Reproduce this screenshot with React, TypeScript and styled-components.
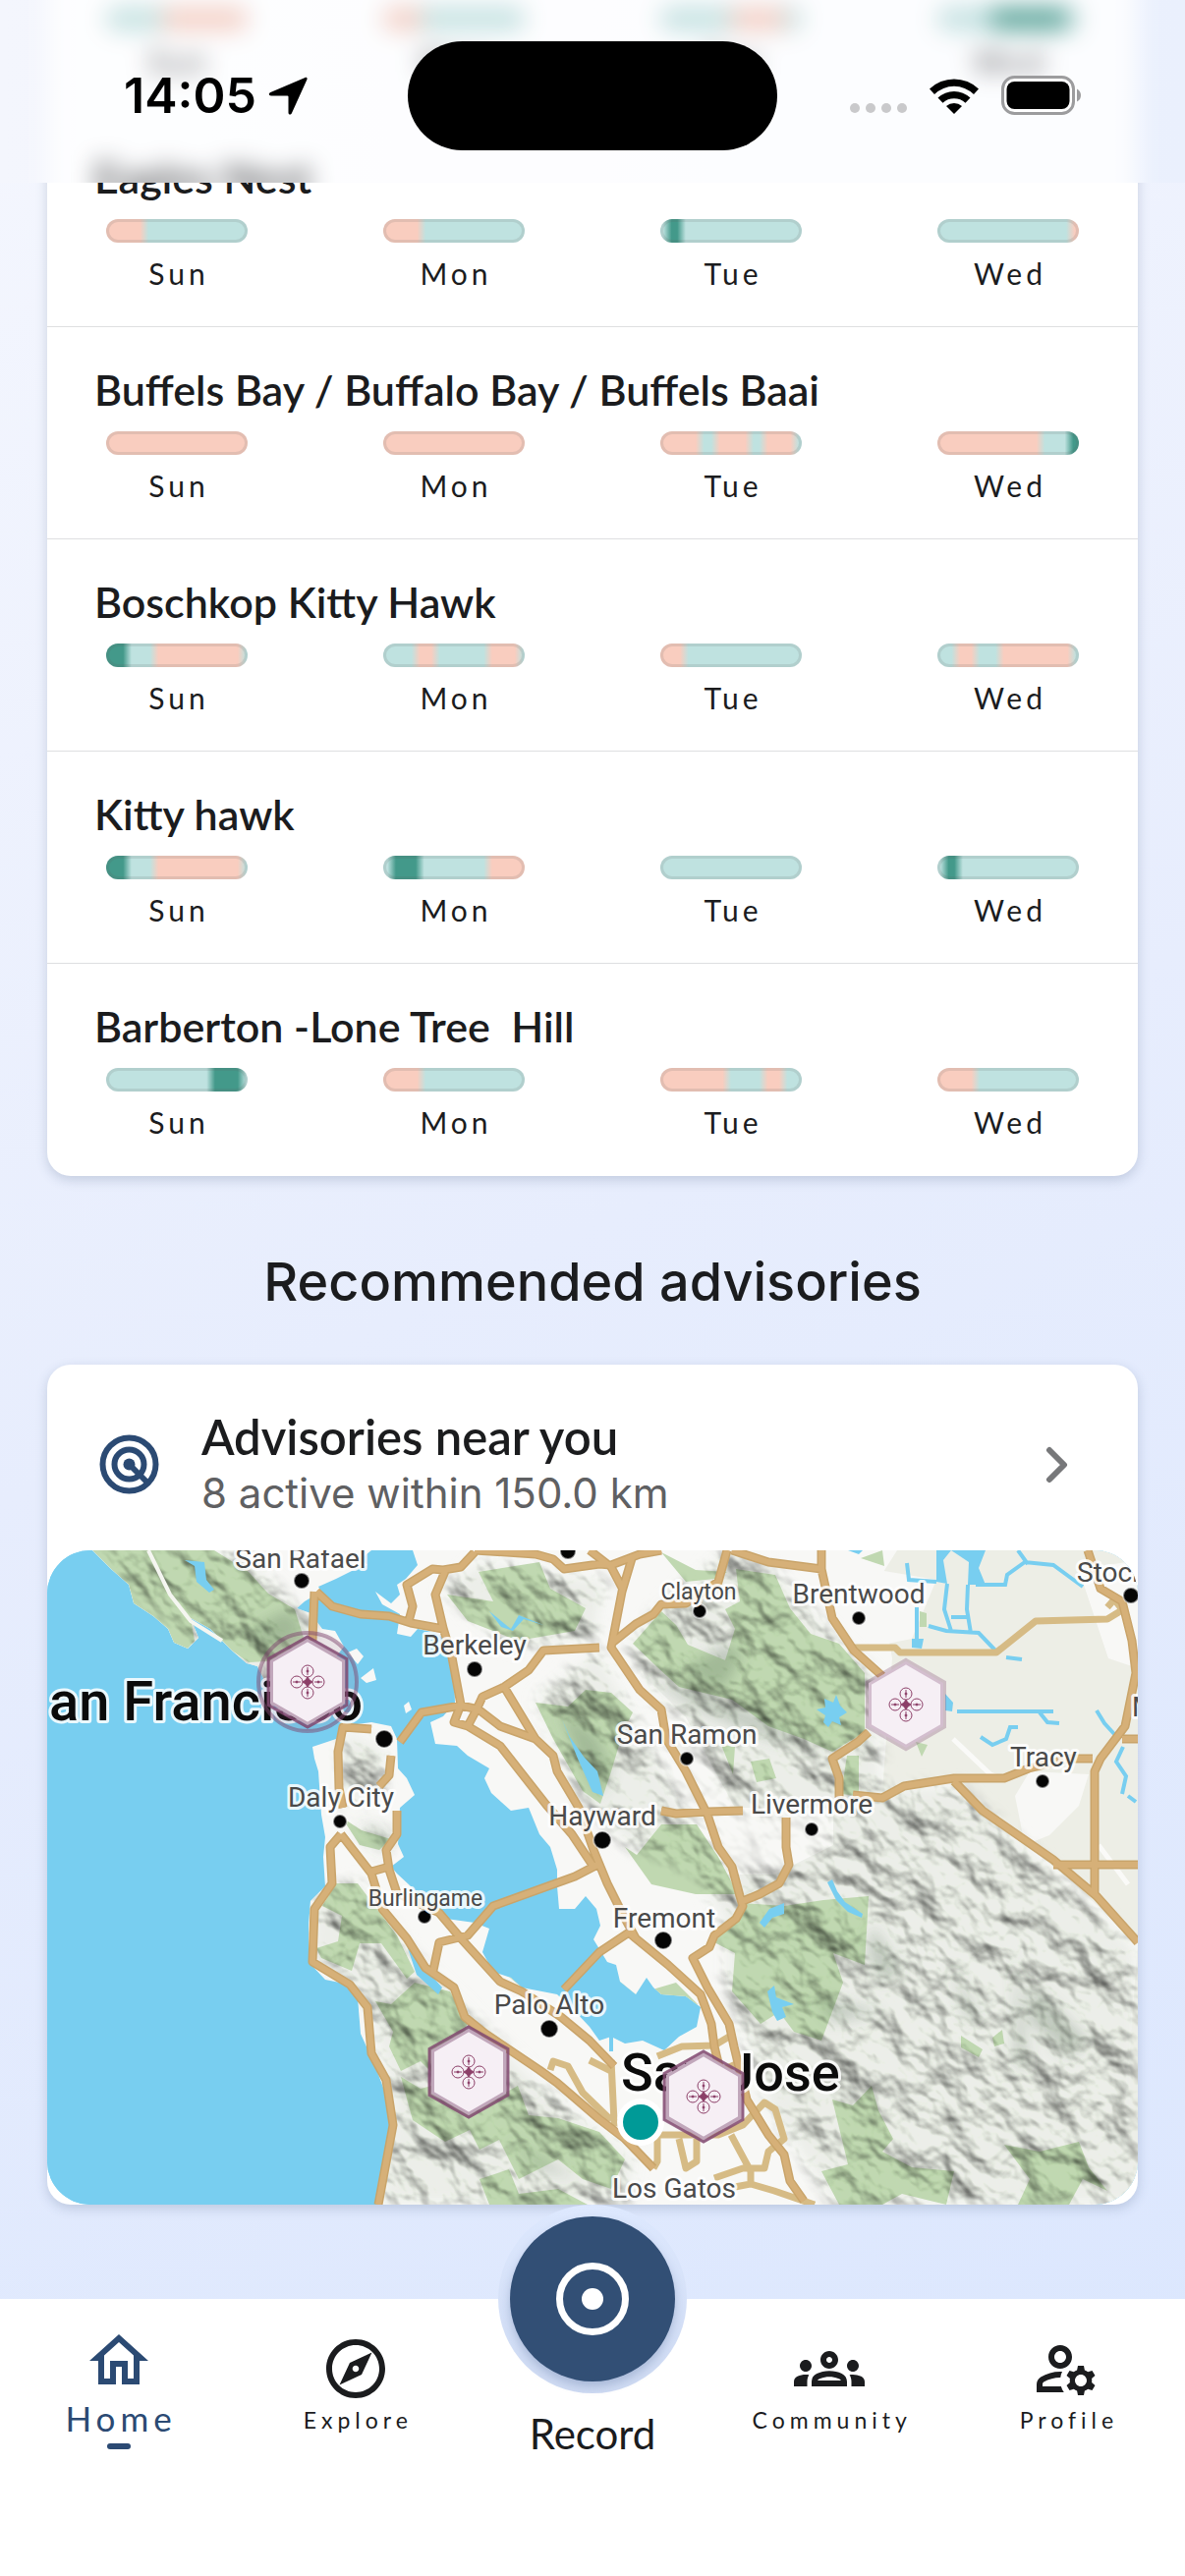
import React from "react";
import styled, { createGlobalStyle, css } from "styled-components";
import {
  MdOutlineHome,
  MdOutlineExplore,
  MdOutlineGroups,
  MdOutlineManageAccounts,
} from "react-icons/md";

const color = {
  ink: "#1b1c1e",
  navy: "#2b4a73",
  button: "#324f75",
  muted: "#5f6062",
  line: "#dedfe1",
  good: "#bfe2e0",
  great: "#43998a",
  poor: "#f9cdbf",
};

const GlobalStyle = createGlobalStyle`
  * { box-sizing: border-box; }
  body {
    margin: 0;
    color: ${color.ink};
    font-family: Lato, "Noto Sans", sans-serif;
  }
  h2, h3, p, ul { margin: 0; padding: 0; font-weight: inherit; }
  a { color: inherit; text-decoration: none; }
`;

const Screen = styled.div`
  display: flex;
  flex-direction: column;
  min-height: 100vh;
  overflow: hidden;
  background: linear-gradient(155deg, #f5f7fe 0%, #e7edfd 48%, #dae6fe 100%);
`;

/* ---------- Status bar ---------- */

const StatusBar = styled.header`
  position: absolute;
  top: 0;
  left: 0;
  right: 0;
  z-index: 2;
  height: 186px;
  overflow: hidden;
  display: grid;
  grid-template-columns: 1fr 376px 1fr;
  align-items: center;
  padding-bottom: 8px;
  padding-top: 16px;
  background: linear-gradient(90deg, #f4f6fd, #eaf0fd);
`;

/* The rows that have scrolled under the bar, seen through frosted glass. */
const Frosted = styled.div`
  position: absolute;
  z-index: -1;
  inset: -60px 48px auto;
  padding-top: 60px;
  background: #fff;
  filter: blur(12px) opacity(0.85);
`;

const Clock = styled.div`
  display: flex;
  align-items: center;
  justify-content: center;
  gap: 12px;
  padding-left: 24px;
  font: 600 50px/60px Inter, sans-serif;
  color: #000;
`;

const Island = styled.div`
  height: 111px;
  border-radius: 56px;
  background: #000;
`;

const Indicators = styled.div`
  display: flex;
  align-items: center;
  justify-content: flex-end;
  gap: 22px;
  padding-right: 105px;
`;

const SignalDots = styled.div`
  display: flex;
  gap: 6px;
  padding-top: 26px;
  span {
    width: 10px;
    height: 10px;
    border-radius: 5px;
    background: #c9c9cb;
  }
`;

/* ---------- Cards ---------- */

const Main = styled.main`
  flex: 1;
  padding: 0 48px 96px;
`;

const Card = styled.section<{ $scrolled?: boolean }>`
  padding-top: ${(p) => (p.$scrolled ? "117px" : "0")};
  background: #fff;
  border-radius: 24px;
  box-shadow: 0 4px 12px rgba(60, 80, 120, 0.22);
  overflow: hidden;
`;

const SiteRow = styled.article<{ $nameless?: boolean }>`
  display: flex;
  flex-direction: column;
  gap: 12px;
  padding: ${(p) => (p.$nameless ? "7px" : "34px")} 48px 34px;
  border-bottom: 1px solid ${(p) => (p.$nameless ? "transparent" : color.line)};
  &:last-child {
    border-bottom-color: transparent;
  }
`;

const SiteName = styled.h3`
  font-size: 43px;
  font-weight: 600;
  line-height: 60px;
  white-space: pre-wrap;
`;

const Days = styled.ul`
  display: flex;
  justify-content: space-between;
  list-style: none;
`;

const Day = styled.li`
  width: 168px;
  display: flex;
  flex-direction: column;
  align-items: center;
  gap: 11px;
  font-size: 30px;
  font-weight: 400;
  line-height: 40px;
  letter-spacing: 4px;
  text-indent: 4px;
`;

const Bar = styled.div`
  width: 144px;
  height: 24px;
  border-radius: 12px;
  box-shadow: inset 0 0 0 3px rgba(90, 90, 90, 0.14);
`;

type Segment = [keyof typeof bands, number];
const bands = { g: color.good, d: color.great, p: color.poor };

function gradient(segments: Segment[]) {
  const stops: string[] = [];
  let start = 0;
  segments.forEach(([band, end], i) => {
    const from = i === 0 ? 0 : start + 3;
    const to = i === segments.length - 1 ? 100 : end - 3;
    stops.push(`${bands[band]} ${from}%`, `${bands[band]} ${to}%`);
    start = end;
  });
  return `linear-gradient(90deg, ${stops.join(", ")})`;
}

const dayNames = ["Sun", "Mon", "Tue", "Wed"];

type Site = { name?: string; days: Segment[][] };

const scrolledSite: Site = {
  days: [
    [["g", 40], ["p", 100]],
    [["p", 27], ["g", 100]],
    [["g", 50], ["p", 88], ["g", 100]],
    [["g", 38], ["d", 92], ["g", 100]],
  ],
};

const sites: Site[] = [
  {
    name: "Eagles Nest",
    days: [
      [["p", 27], ["g", 100]],
      [["p", 27], ["g", 100]],
      [["g", 5], ["d", 15], ["g", 100]],
      [["g", 94], ["p", 100]],
    ],
  },
  {
    name: "Buffels Bay / Buffalo Bay / Buffels Baai",
    days: [
      [["p", 100]],
      [["p", 100]],
      [["p", 28], ["g", 39], ["p", 63], ["g", 73], ["p", 95], ["g", 100]],
      [["p", 73], ["g", 93], ["d", 100]],
    ],
  },
  {
    name: "Boschkop Kitty Hawk",
    days: [
      [["d", 15], ["g", 34], ["p", 96], ["g", 100]],
      [["g", 23], ["p", 37], ["g", 74], ["p", 96], ["g", 100]],
      [["p", 17], ["g", 100]],
      [["g", 13], ["p", 27], ["g", 44], ["p", 95], ["g", 100]],
    ],
  },
  {
    name: "Kitty hawk",
    days: [
      [["d", 15], ["g", 34], ["p", 96], ["g", 100]],
      [["g", 6], ["d", 26], ["g", 74], ["p", 100]],
      [["g", 100]],
      [["g", 5], ["d", 15], ["g", 100]],
    ],
  },
  {
    name: "Barberton -Lone Tree  Hill",
    days: [
      [["g", 74], ["d", 96], ["g", 100]],
      [["p", 27], ["g", 100]],
      [["p", 47], ["g", 73], ["p", 87], ["g", 100]],
      [["p", 27], ["g", 100]],
    ],
  },
];

function SiteForecast({ site }: { site: Site }) {
  return (
    <SiteRow $nameless={!site.name}>
      {site.name && <SiteName>{site.name}</SiteName>}
      <Days>
        {site.days.map((segments, d) => (
          <Day key={d}>
            <Bar style={{ background: gradient(segments) }} />
            {dayNames[d]}
          </Day>
        ))}
      </Days>
    </SiteRow>
  );
}

const SectionTitle = styled.h2`
  padding: 78px 0 54px;
  text-align: center;
  font: 500 54px/60px Inter, sans-serif;
`;

const AdvisoryLink = styled.a`
  display: flex;
  align-items: center;
  gap: 43px;
  height: 189px;
  padding: 14px 69px 0 53px;
`;

const AdvisoryText = styled.div`
  flex: 1;
  h3 {
    font-size: 49px;
    font-weight: 600;
    line-height: 58px;
  }
  p {
    font: 400 42px/58px Inter, sans-serif;
    color: ${color.muted};
  }
`;

/* ---------- Map ---------- */

const MapView = styled.svg`
  display: block;
  width: 100%;
  height: auto;
  border-radius: 44px;
  background: #78cef0;
  text {
    font-family: Roboto, sans-serif;
    fill: #4a4a4a;
    stroke: rgba(255, 255, 255, 0.85);
    stroke-width: 6px;
    stroke-linejoin: round;
    paint-order: stroke;
  }
`;

const land = [
  "M46,0 65,19 83,35 88,54 108,67 123,80 129,94 143,100 154,89 146,69 166,80 188,102 203,115 214,118 230,150 262,160 285,120 302,98 293,82 280,80 268,64 254,59 262,52 279,42 276,37 294,29 312,20 326,15 319,9 330,0Z",
  "M372,0 377,15 365,29 356,35 359,45 350,54 334,42 341,55 359,65 356,85 370,88 377,80 396,84 406,92 408,109 414,125 415,155 403,169 390,175 395,197 417,199 428,209 450,222 445,232 452,247 472,265 490,262 501,289 512,302 519,325 519,342 521,365 537,365 548,352 559,365 563,382 556,396 570,419 579,422 583,439 599,452 610,435 617,445 625,452 650,454 665,465 661,485 643,495 628,509 606,499 588,502 574,495 562,499 552,485 537,469 519,452 483,445 472,435 454,429 443,409 450,385 435,379 399,374 381,355 370,342 356,329 350,322 363,312 357,299 359,262 374,249 366,232 357,222 356,192 350,179 330,175 301,179 294,192 270,200 272,212 276,225 279,269 283,292 281,312 283,342 268,357 266,382 266,419 283,437 308,442 316,455 319,492 334,525 345,555 352,565 348,592 343,622 336,666 1110,666 1110,0Z",
  "M306,104 316,116 322,108 315,100ZM319,130 332,120 335,132 325,135ZM363,158 368,154 371,162 365,166Z",
].join("");

const delta =
  "M846,30 865,0 1110,0 1110,666 1090,666 1110,400 1040,335 960,270 925,235 850,245 860,110Z";

const woods = [
  "M46,0 65,19 83,35 88,54 108,67 123,80 129,94 143,100 150,92 146,69 166,80 188,102 205,114 240,112 262,92 252,60 225,44 205,22 170,0Z",
  "M407,45 454,52 439,22 501,12 512,39 548,59 537,82 479,92 428,72Z",
  "M497,155 530,159 548,142 574,145 596,165 586,185 574,225 563,258 545,245 515,192Z",
  "M701,19 741,25 756,59 777,85 806,95 832,125 832,185 799,205 770,192 734,179 697,152 643,139 621,119 596,95 625,62 640,76 652,96 690,112 700,80 690,60 705,52Z",
  "M625,2 660,20 692,22 680,29 650,32Z",
  "M814,209 826,209 826,250 808,248ZM716,215 735,212 742,232 722,236ZM686,198 700,200 698,228Z",
  "M588,302 600,310 625,279 661,279 683,312 703,350 660,350 615,340Z",
  "M294,339 316,339 356,392 374,429 366,436 340,400 318,400 310,428 279,415 274,405 296,398 300,372 280,362Z",
  "M374,440 410,449 428,479 421,505 392,532 380,520 360,530 348,505 352,490 334,459 350,462Z",
  "M360,536 380,548 410,540 452,560 479,545 490,575 520,578 562,592 588,620 574,650 545,640 520,620 480,640 460,600 440,610 430,590 405,602 372,580ZM440,640 470,630 480,655 520,650 550,666 450,666Z",
  "M708,359 750,362 790,356 836,352 832,422 800,410 810,440 788,499 760,490 745,470 726,482 697,449 700,410 679,399Z",
  "M799,559 820,565 839,545 846,570 861,599 850,612 880,628 923,632 915,666 870,655 850,666 806,666 788,632 815,625Z",
  "M974,605 1010,612 1050,602 1060,628 1079,652 1054,640 1040,666 988,666 1000,640Z",
  "M930,494 952,508 948,516 930,506ZM962,496 972,488 974,502 964,505Z",
  "M465,430 480,405 494,420 512,440 550,430 562,440 545,452 483,445Z",
  "M583,439 599,452 640,440 662,462 655,482 610,490 575,470Z",
  "M300,272 320,285 350,294 338,305 318,300Z",
  "M828,8 850,0 852,16ZM888,62 895,64 895,78 888,78ZM884,195 896,198 890,210Z",
].join("");

const relief =
  "M46,0 150,100 240,150 275,80 200,0ZM400,40 440,10 570,30 560,90 470,100ZM497,150 560,100 590,150 640,250 690,330 700,400 660,330 590,300 540,250ZM590,95 625,55 690,0 740,20 810,95 845,130 850,240 925,238 1030,330 1110,405 1110,666 800,666 735,570 690,440 690,330 650,210ZM300,180 345,200 340,250 300,260ZM310,275 355,290 340,310ZM270,350 316,335 370,410 430,470 500,540 600,620 590,666 338,666 350,560 320,450 268,410Z";

const shadows =
  "M215,75 245,60 262,80 240,100 205,92ZM650,120 690,95 708,105 690,140 665,135ZM610,130 680,150 740,175 790,205 730,190 660,160ZM520,160 560,190 575,225 560,250 545,220ZM320,275 350,290 340,308ZM840,382 870,430 850,440 835,410ZM1000,440 1060,500 1040,515 1000,480ZM985,410 995,500 1000,530 985,520ZM920,420 950,480 935,475ZM470,600 540,640 500,630ZM780,455 850,470 800,480Z";

const flats = "M580,105 620,170 645,260 690,330 740,330 800,300 800,262 700,262 650,170 620,140Z";

const lakes = [
  "M783,162 792,160 791,151 800,155 803,147 807,158 814,165 806,170 808,178 799,174 795,180 790,175 792,168Z",
  "M725,379 735,365 750,359 750,370 738,374 730,384Z",
  "M794,338 799,335 804,347 812,358 830,370 829,374 815,368 803,356Z",
  "M733,449 740,443 742,455 760,462 748,465 752,475 743,479 738,470Z",
  "M140,10 160,12 162,30 170,40 165,43 152,32 150,16Z",
  "M366,402 380,420 402,445 398,452 376,432Z",
  "M444,54 462,78 474,82 485,70 505,76 480,66 472,80 450,62Z",
  "M524,172 532,190 546,210 560,225 566,250 555,246 540,212Z",
  "M905,0 955,0 948,18 955,35 937,35 938,12 920,0 912,10 916,34 905,32Z",
  "M880,90 892,90 890,100 880,99ZM914,146 922,155 921,164 914,163ZM815,0 830,0 826,4Z",
].join("");

const creeks =
  "M875,13 877,30 905,32M885,58 885,95M897,77 915,82 948,84 968,105M916,34 913,60 920,82M937,35 936,60 940,84M920,68H938M945,35H975L977,25 995,12 1024,15 1054,37M988,0 998,14M926,164H1024M1010,165 1018,175 1030,176M950,190 962,198 976,192 980,180 988,180M976,109 992,111M1068,163 1076,176 1086,187M1095,200 1088,215 1098,230 1094,248M1100,250 1108,256M574,495V510";

const roads = [
  "M270,92 272,42M274,42 290,57 319,65 348,67 370,74 403,80",
  "M435,2 421,17 403,20 392,19 366,35 372,57 368,72M406,19 395,45 403,79 412,109 421,157",
  "M435,0 497,4 515,9 526,19 562,14 574,15 603,4 625,0M552,0 574,17 585,38",
  "M596,5 585,42 574,99 603,142 625,162 630,192 650,225 672,269 683,302 697,322 705,352 708,362 701,375 679,392 674,404 657,415 672,445 694,482 699,505 712,559 734,595 750,615 756,642 770,662",
  "M574,95 599,75 617,65 625,55 650,54 683,32 692,0",
  "M697,0 734,12 788,19 799,69 821,102 850,128M788,19 788,0",
  "M1059,0 1072,39 1094,52 1104,92 1108,125 1097,179 1072,212 1066,225V352M1110,192H1094",
  "M1064,212 1040,212 999,222 974,232 923,232 872,240 850,252 820,249",
  "M923,235 952,265 1024,315 1068,352 1110,399M1024,320H1110",
  "M836,185 825,195 799,212 806,232 806,252",
  "M625,265 640,268 672,266 708,265M752,272V302L755,320 745,339 725,350 708,357",
  "M562,99 505,102 490,122 465,139 443,149 437,162 428,179 414,175 421,157",
  "M359,195 381,165 421,158 439,162 461,179 497,192 515,209 519,225 541,262 556,305 570,339 585,369 599,395 632,422 665,452 676,482 679,505 685,530",
  "M465,139 497,192M428,179 461,199 479,222 508,259 534,289 556,322",
  "M301,262 297,242 296,205 301,180 330,182M350,209 348,229 338,240M356,265V289L345,305 348,325 356,349 399,369 421,395 461,439 483,449 523,475 552,499 577,525",
  "M299,289 330,329 341,365 366,395 385,425 414,445 425,475 446,492 501,529 519,542 562,579 588,599 617,629M330,327 348,322",
  "M299,289 288,302 290,339 272,365 270,419 308,442 326,465 330,512 345,539 352,585 337,666",
  "M392,432 399,399 428,392 454,362 537,332 562,319M526,447 562,409 592,389 599,395",
];

const streets = [
  "M817,99H863L868,104H966L1006,72 1079,70 1097,59M621,515 646,505 679,504 694,495",
  "M574,519 577,582 625,595 683,595 708,585 730,562 741,569 750,599 734,612 730,629 708,629 679,639M621,595V622L617,629",
  "M643,599 650,629 661,622V599M696,595 716,632V645L740,652 781,666M716,645 700,648",
  "M512,529 515,520 530,525 545,552 574,580M552,519 574,530M552,559 574,580M685,530 708,520M1079,58 1086,50 1094,60",
];

const places: { label: string; x: number; y: number; size?: number; anchor?: "start" | "end" }[] = [
  { label: "San Rafael", x: 258, y: 18 },
  { label: "Berkeley", x: 435, y: 106 },
  { label: "Daly City", x: 299, y: 261 },
  { label: "Clayton", x: 663, y: 50, size: 23 },
  { label: "Brentwood", x: 826, y: 54 },
  { label: "Stock", x: 1048, y: 32, anchor: "start" },
  { label: "San Ramon", x: 651, y: 197 },
  { label: "Tracy", x: 1014, y: 220 },
  { label: "Livermore", x: 778, y: 268 },
  { label: "Hayward", x: 565, y: 280 },
  { label: "M", x: 1104, y: 169, anchor: "start" },
  { label: "Burlingame", x: 385, y: 362, size: 23 },
  { label: "Palo Alto", x: 511, y: 472 },
  { label: "Fremont", x: 628, y: 384 },
  { label: "Los Gatos", x: 638, y: 659 },
];

const dots = [
  [259, 31, 7], [435, 121, 7], [343, 192, 8], [298, 276, 6], [664, 62, 6],
  [826, 69, 6], [1103, 46, 7], [651, 212, 6], [1013, 235, 6], [778, 284, 6],
  [565, 295, 8], [384, 373, 6], [511, 487, 8], [627, 397, 8], [530, 1, 7],
];

function DronePin({ x, y, tone = 0.75 }: { x: number; y: number; tone?: number }) {
  return (
    <g transform={`translate(${x} ${y})`}>
      <path
        d="M0,-44 38,-22V22L0,44 -38,22V-22Z"
        fill="#f6eff5"
        stroke="#8a5a7e"
        strokeOpacity={tone * 0.65}
        strokeWidth="6"
      />
      {tone > 0.5 && (
        <path
          d="M0,-46 40,-23.500V23.500L0,46 -40,23.500V-23.500Z"
          fill="none"
          stroke="#80476f"
          strokeOpacity="0.75"
          strokeWidth="3"
        />
      )}
      <g fill="none" stroke="#8c3f68" strokeWidth="1">
        {[[0, -11], [0, 11], [-11, 0], [11, 0]].map(([cx, cy]) => (
          <g key={`${cx},${cy}`}>
            <circle cx={cx} cy={cy} r="6" />
            <circle cx={cx} cy={cy} r="1" fill="#8c3f68" />
            <path d={cx ? `M${cx - 4},0h8` : `M0,${cy - 4}v8`} />
          </g>
        ))}
        <path d="M0,-5 2,-2 5,0 2,2 0,5 -2,2 -5,0 -2,-2Z" fill="#8c3f68" />
      </g>
    </g>
  );
}

function AdvisoryMap() {
  return (
    <MapView viewBox="0 0 1110 666" role="img" aria-label="Map of advisories near you">
      <defs>
        <filter id="hills" x="0" y="0" width="100%" height="100%" colorInterpolationFilters="sRGB">
          <feTurbulence type="fractalNoise" baseFrequency="0.018 0.024" numOctaves="4" seed="8" />
          <feColorMatrix values="0 0 0 0 0  0 0 0 0 0  0 0 0 0 0  1 0 0 0 0" />
          <feGaussianBlur stdDeviation="1" />
          <feDiffuseLighting surfaceScale="10" diffuseConstant="1.1" lightingColor="#fcfffa">
            <feDistantLight azimuth="250" elevation="60" />
          </feDiffuseLighting>
        </filter>
        <filter id="soften">
          <feGaussianBlur stdDeviation="7" />
        </filter>
        <clipPath id="landClip">
          <path d={land} />
        </clipPath>
        <mask id="reliefMask" maskUnits="userSpaceOnUse" x="0" y="0" width="1110" height="666">
          <g filter="url(#soften)">
            <path d={relief} fill="#e8e8e8" />
            <path d={flats} fill="#333" />
          </g>
        </mask>
      </defs>
      <rect width="1110" height="666" fill="#78cef0" />
      <path d={land} fill="#f8f8f6" />
      <g clipPath="url(#landClip)">
        <path d={delta} fill="#edeee6" />
        <path
          d="M985,250 1000,225 1060,228 1050,260 1020,290 995,300ZM846,20 905,30 880,90 830,100ZM1050,20 1110,10V120L1080,110Z"
          fill="#f8f8f6"
        />
        <path d={relief} fill="#eceee9" filter="url(#soften)" />
        <path d={flats} fill="#f8f8f6" />
        <path d={woods} fill="#c0d8b1" />
        <path d={shadows} fill="#5d6f5a" fillOpacity="0.3" filter="url(#soften)" />
        <g mask="url(#reliefMask)" style={{ mixBlendMode: "multiply" }}>
          <g transform="rotate(45 555 333)">
            <rect x="-100" y="-320" width="1310" height="1310" filter="url(#hills)" />
          </g>
        </g>
      </g>
      <path d={lakes} fill="#78cef0" />
      <path d={creeks} fill="none" stroke="#78cef0" strokeWidth="4" />
      <path d="M103,0 125,45 146,72 178,92" fill="none" stroke="#f5f6f1" strokeWidth="4" />
      <path
        d="M922,192 960,228 975,234M1070,300 1100,340"
        fill="none"
        stroke="#fafaf8"
        strokeWidth="5"
      />
      <g fill="none" strokeLinejoin="round">
        <path d={streets.join("")} stroke="#d6bb85" strokeWidth="7" />
        <path d={roads.join("")} stroke="#c9a46a" strokeWidth="9" />
        <path d={roads.join("")} stroke="#d6b078" strokeWidth="6" />
      </g>
      {dots.map(([cx, cy, r]) => (
        <circle key={`${cx}-${cy}`} cx={cx} cy={cy} r={r + 1} stroke="#fff" strokeOpacity="0.5" strokeWidth="2" fill="#050505" />
      ))}
      {places.map((p) => (
        <text key={p.label} x={p.x} y={p.y} fontSize={p.size ?? 28} textAnchor={p.anchor ?? "middle"}>
          {p.label}
        </text>
      ))}
      <g fontWeight="500">
        <text x="321" y="173" fontSize="56" textAnchor="end" style={{ fill: "#0b0b0b" }}>
          an Francisco
        </text>
        <text x="584" y="550" fontSize="54" style={{ fill: "#0b0b0b" }}>
          San Jose
        </text>
      </g>
      <circle cx="265" cy="134" r="50" fill="#8a5a7e" fillOpacity="0.12" stroke="#80476f" strokeOpacity="0.5" strokeWidth="4" />
      <DronePin x={265} y={134} />
      <DronePin x={874} y={157} tone={0.5} />
      <DronePin x={429} y={531} />
      <circle cx="604" cy="582" r="21" fill="#009a97" stroke="#fff" strokeWidth="6" />
      <DronePin x={668} y={556} />
    </MapView>
  );
}

/* ---------- Navigation ---------- */

const Nav = styled.nav`
  display: grid;
  grid-template-columns: repeat(5, 1fr);
  height: 282px;
  background: #fff;
`;

const NavLink = styled.a<{ $active?: boolean }>`
  display: flex;
  flex-direction: column;
  align-items: center;
  padding-top: 35px;
  font-size: 23px;
  font-weight: 400;
  line-height: 32px;
  letter-spacing: 5px;
  text-indent: 5px;
  svg {
    width: 72px;
    height: 72px;
  }
  ${(p) =>
    p.$active &&
    css`
      padding-top: 27px;
      color: ${color.navy};
      font-size: 35px;
      line-height: 44px;
      &::after {
        content: "";
        width: 24px;
        height: 6px;
        margin-top: 4px;
        border-radius: 3px;
        background: ${color.navy};
      }
    `}
`;

const RecordItem = styled.div`
  display: flex;
  flex-direction: column;
  align-items: center;
  gap: 11px;
  margin-top: -96px;
  font-size: 42px;
  line-height: 60px;
`;

const RecordRing = styled.div`
  padding: 12px;
  border-radius: 50%;
  background: linear-gradient(#dde8fe, #cfdbf3);
`;

const RecordButton = styled.button`
  display: grid;
  place-items: center;
  width: 168px;
  height: 168px;
  padding: 0;
  border: 0;
  border-radius: 50%;
  background: ${color.button};
  box-shadow: 0 5px 10px rgba(50, 79, 130, 0.25);
`;

export default function App() {
  return (
    <Screen>
      <GlobalStyle />
      <StatusBar>
        <Frosted aria-hidden="true">
          <SiteForecast site={scrolledSite} />
          <SiteForecast site={sites[0]} />
        </Frosted>
        <Clock>
          14:05
          <svg width="40" height="39" viewBox="0 0 40 39" aria-hidden="true">
            <path
              d="M37.500,1 C39,0.500 40,1.500 39.400,3 L24,37 C23,39.300 20.500,39 20.500,36.500 V20.500 Q20.500,19.500 19.500,19.500 H3 C0.500,19.500 0,17 2.300,16 Z"
              fill="#000"
            />
          </svg>
        </Clock>
        <Island />
        <Indicators>
          <SignalDots>
            <span />
            <span />
            <span />
            <span />
          </SignalDots>
          <svg width="52" height="38" viewBox="0 0 52 38" aria-hidden="true">
            <path d="M1,12.500a36,36 0 0 1 50,0l-5,5.500a28.500,28.500 0 0 0-40,0Z" />
            <path d="M9.500,21.500a24,24 0 0 1 33,0l-5,5.300a17,17 0 0 0-23,0Z" />
            <path d="M18,30a12,12 0 0 1 16,0l-8,8Z" />
          </svg>
          <svg width="82" height="40" viewBox="0 0 82 40" aria-hidden="true">
            <rect x="1.500" y="1.500" width="72" height="37" rx="12" fill="#fff" stroke="#9c9c9e" strokeWidth="3" />
            <rect x="5.500" y="6" width="64" height="28" rx="8" />
            <path d="M77,13.500q4,2 4,6.500t-4,6.500Z" fill="#9c9c9e" />
          </svg>
        </Indicators>
      </StatusBar>

      <Main>
        <Card $scrolled>
          {sites.map((site) => (
            <SiteForecast key={site.name} site={site} />
          ))}
        </Card>

        <SectionTitle>Recommended advisories</SectionTitle>

        <Card>
          <AdvisoryLink href="#advisories">
            <svg width="61" height="61" viewBox="0 0 61 61" fill="none" stroke={color.navy} strokeWidth="6" aria-hidden="true">
              <circle cx="30.500" cy="30.500" r="27" />
              <circle cx="30.500" cy="30.500" r="15" />
              <circle cx="30.500" cy="30.500" r="6" fill={color.navy} stroke="none" />
              <path d="M31,31 49,49" />
            </svg>
            <AdvisoryText>
              <h3>Advisories near you</h3>
              <p>8 active within 150.0 km</p>
            </AdvisoryText>
            <svg width="26" height="38" viewBox="0 0 26 38" fill="none" stroke="#77787a" strokeWidth="6" aria-hidden="true">
              <path d="M5,4 20,19 5,34" strokeLinecap="round" strokeLinejoin="round" />
            </svg>
          </AdvisoryLink>
          <AdvisoryMap />
        </Card>
      </Main>

      <Nav>
        <NavLink href="#home" $active aria-current="page">
          <MdOutlineHome />
          Home
        </NavLink>
        <NavLink href="#explore">
          <MdOutlineExplore />
          Explore
        </NavLink>
        <RecordItem>
          <RecordRing>
            <RecordButton aria-labelledby="record-label">
              <svg width="76" height="76" viewBox="0 0 76 76" aria-hidden="true">
                <circle cx="38" cy="38" r="33.500" fill="none" stroke="#fff" strokeWidth="7" />
                <circle cx="38" cy="38" r="11" fill="#fff" />
              </svg>
            </RecordButton>
          </RecordRing>
          <span id="record-label">Record</span>
        </RecordItem>
        <NavLink href="#community">
          <MdOutlineGroups />
          Community
        </NavLink>
        <NavLink href="#profile">
          <MdOutlineManageAccounts />
          Profile
        </NavLink>
      </Nav>
    </Screen>
  );
}
